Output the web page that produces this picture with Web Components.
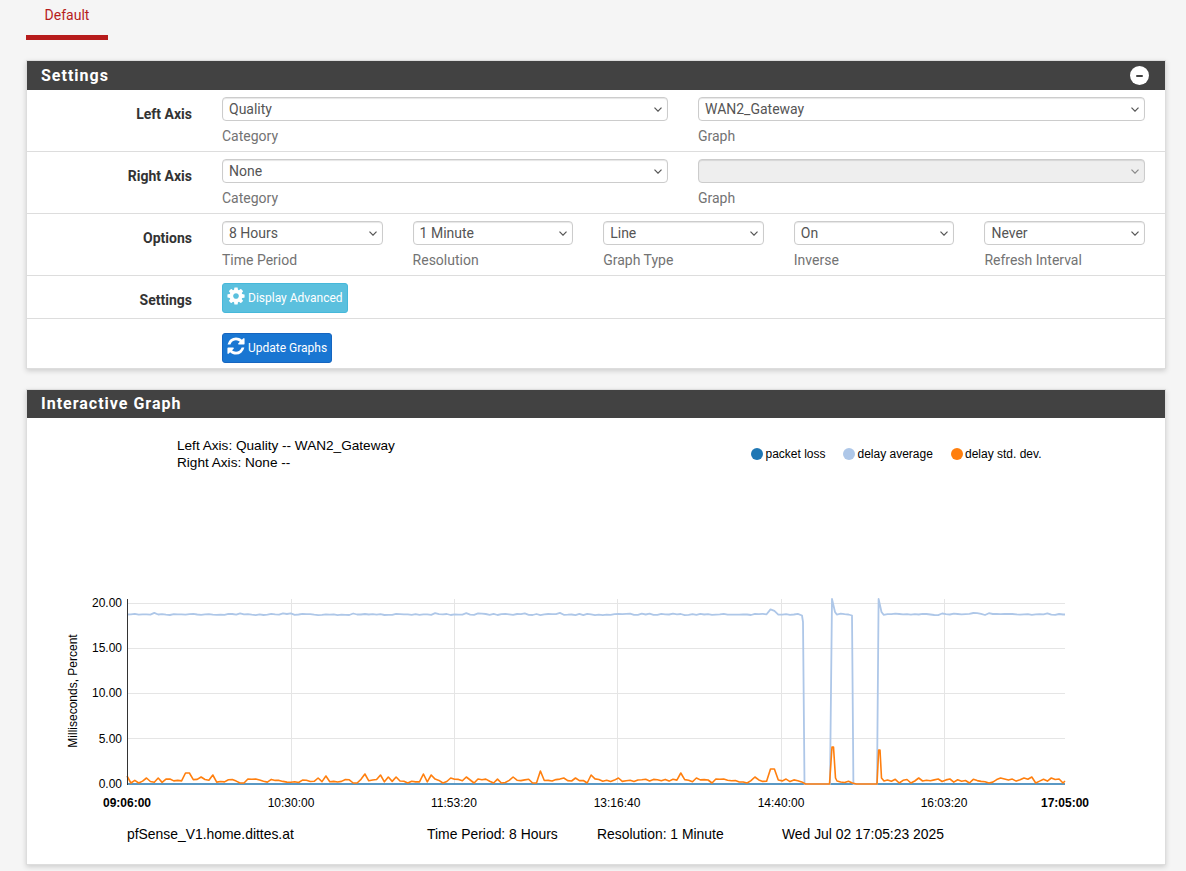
<!DOCTYPE html>
<html><head><meta charset="utf-8"><title>Status: Monitoring</title>
<style>
html,body{margin:0;background:#f5f5f5;font-family:Roboto,"Liberation Sans",sans-serif;font-size:14px;color:#333}
</style></head><body>
<pf-page>
  <pf-tab>Default</pf-tab>
  <pf-panel heading="Settings" collapse>
    <pf-row label="Left Axis" cols="2">
      <pf-select value="Quality" help="Category"></pf-select>
      <pf-select value="WAN2_Gateway" help="Graph"></pf-select>
    </pf-row>
    <pf-row label="Right Axis" cols="2">
      <pf-select value="None" help="Category"></pf-select>
      <pf-select value="" help="Graph" disabled></pf-select>
    </pf-row>
    <pf-row label="Options" cols="5">
      <pf-select value="8 Hours" help="Time Period"></pf-select>
      <pf-select value="1 Minute" help="Resolution"></pf-select>
      <pf-select value="Line" help="Graph Type"></pf-select>
      <pf-select value="On" help="Inverse"></pf-select>
      <pf-select value="Never" help="Refresh Interval"></pf-select>
    </pf-row>
    <pf-row label="Settings" cols="1" compact><pf-button icon="cog" color="#5bc0de" edge="#46b8da">Display Advanced</pf-button></pf-row>
    <pf-row label="" cols="1" compact last><pf-button icon="refresh" color="#1976d2" edge="#1565c0">Update Graphs</pf-button></pf-row>
  </pf-panel>
  <pf-panel heading="Interactive Graph" style="margin-top:20px"><pf-chart></pf-chart></pf-panel>
</pf-page>
<script>
class PfTab extends HTMLElement{constructor(){super();this.attachShadow({mode:'open'}).innerHTML=`<style>
:host{display:block;width:82px;height:40px;box-sizing:border-box;border-bottom:5px solid #b71c1c;color:#b71c1c;font:14px Roboto,sans-serif;text-align:center;line-height:16px;padding-top:7px;margin-bottom:20px}
</style><slot></slot>`}}
class PfPanel extends HTMLElement{constructor(){super();const r=this.attachShadow({mode:'open'});
r.innerHTML=`<style>
:host{display:block;background:#fff;border:1px solid #ddd;box-shadow:0 2px 5px rgba(0,0,0,.16)}
header{box-sizing:border-box;height:28px;padding:0 16px 2px 14px;background:#424242;color:#fff;display:flex;align-items:center;justify-content:space-between;font:700 16px Roboto,sans-serif;letter-spacing:1px}
:host([collapse]) header{height:29px;padding-bottom:0}
.min{width:19px;height:19px;border-radius:50%;background:#fff;display:flex;align-items:center;justify-content:center}
.min i{display:block;width:7px;height:2px;background:#424242;border-radius:1px}
</style><header><span id="t"></span><span class="min" id="m"><i></i></span></header><slot></slot>`;}
connectedCallback(){const r=this.shadowRoot;r.getElementById('t').textContent=this.getAttribute('heading');if(!this.hasAttribute('collapse'))r.getElementById('m').remove();}}
class PfRow extends HTMLElement{constructor(){super();this.attachShadow({mode:'open'}).innerHTML=`<style>
:host{display:grid;grid-template-columns:165px 1fr;column-gap:30px;padding:7px 20px 0 0;box-sizing:border-box;height:62px;border-bottom:1px solid #ddd}
:host([compact]){height:43px}
:host([last]){height:49px;border-bottom:0;padding-top:14px}
label{font:700 14px/16px Roboto,sans-serif;color:#333;text-align:right;padding-top:9px}
.c{display:grid;gap:30px;align-items:start}
</style><label id="l"></label><div class="c" id="c"><slot></slot></div>`}
connectedCallback(){const r=this.shadowRoot;r.getElementById('l').textContent=this.getAttribute('label');const n=this.getAttribute('cols');r.getElementById('c').style.gridTemplateColumns=n==='1'?'max-content':n==='2'?'446px 1fr':`repeat(${n},1fr)`;}}
class PfSelect extends HTMLElement{constructor(){super();this.attachShadow({mode:'open'}).innerHTML=`<style>
:host{display:block;min-width:0;position:relative}
select{display:block;width:100%;height:24px;box-sizing:border-box;background:#fff;border:1px solid #ccc;border-radius:4px;box-shadow:inset 0 1px 1px rgba(0,0,0,.1);color:#555;font:14px Roboto,sans-serif;padding:0 6px;margin:0;outline:0;appearance:none;-webkit-appearance:none}
select:disabled{background:#eee;opacity:1}
svg{position:absolute;right:6px;top:10px;width:8px;height:5px;fill:none;stroke:#555;stroke-width:1.2;pointer-events:none}
:host([disabled]) svg{stroke:#888}
div{font:14px/16px Roboto,sans-serif;color:#737373;margin-top:7px}
</style><select><option></option></select><svg viewBox="0 0 8 5"><path d="M.5 .7L4 4.2L7.500 .7"/></svg><div></div>`}
connectedCallback(){const r=this.shadowRoot;const s=r.querySelector('select');s.options[0].textContent=this.getAttribute('value');s.disabled=this.hasAttribute('disabled');r.querySelector('div').textContent=this.getAttribute('help');}}
const ICONS={cog:"M1152 896q0-106-75-181t-181-75-181 75-75 181 75 181 181 75 181-75 75-181zm512-109v222q0 12-8 23t-20 13l-185 28q-19 54-39 91 35 50 107 138 10 12 10 25t-9 23q-27 37-99 108t-94 71q-12 0-26-9l-138-108q-44 23-91 38-16 136-29 186-7 28-36 28h-222q-14 0-24.5-8.5t-11.5-21.5l-28-184q-49-16-90-37l-141 107q-10 9-25 9-14 0-25-11-126-114-165-168-7-10-7-23 0-12 8-23 15-21 51-66.5t54-70.5q-27-50-41-99l-183-27q-13-2-21-12.5t-8-23.5v-222q0-12 8-23t19-13l186-28q14-46 39-92-40-57-107-138-10-12-10-24 0-10 9-23 26-36 98.5-107.5t94.5-71.5q13 0 26 10l138 107q44-23 91-38 16-136 29-186 7-28 36-28h222q14 0 24.5 8.5t11.5 21.5l28 184q49 16 90 37l142-107q9-9 24-9 13 0 25 10 129 119 165 170 7 8 7 22 0 12-8 23-15 21-51 66.5t-54 70.5q26 50 41 98l183 28q13 2 21 12.5t8 23.5z",
refresh:"M1639 1056q0 5-1 7-64 268-268 434.5t-478 166.5q-146 0-282.5-55t-243.5-157l-129 129q-19 19-45 19t-45-19-19-45v-448q0-26 19-45t45-19h448q26 0 45 19t19 45-19 45l-137 137q71 66 161 102t187 36q134 0 250-65t186-179q11-17 53-117 8-23 30-23h192q13 0 22.5 9.5t9.5 22.5zm25-800v448q0 26-19 45t-45 19h-448q-26 0-45-19t-19-45 19-45l138-138q-148-137-349-137-134 0-250 65t-186 179q-11 17-53 117-8 23-30 23h-199q-13 0-22.5-9.5t-9.5-22.5v-7q65-268 270-434.5t480-166.5q146 0 284 55.5t245 156.5l130-129q19-19 45-19t45 19 19 45z"};
class PfButton extends HTMLElement{constructor(){super();this.attachShadow({mode:'open'}).innerHTML=`<style>
:host{display:inline-flex;align-items:center;height:30px;box-sizing:border-box;border:1px solid;border-radius:3px;color:#fff;font:12px Roboto,sans-serif;padding:0 4px 0 3px;gap:2px}
svg{width:20px;height:20px;fill:#fff;display:block;margin-top:-4px}
</style><svg viewBox="0 0 1792 1792"><path></path></svg><slot></slot>`}
connectedCallback(){this.style.background=this.getAttribute('color');this.style.borderColor=this.getAttribute('edge');this.shadowRoot.querySelector('path').setAttribute('d',ICONS[this.getAttribute('icon')]);}}
class PfChart extends HTMLElement{constructor(){super();
let seed=12345;const rnd=()=>{seed=(seed*1664525+1013904223)>>>0;return seed/4294967296};
const X0=127,X1=1065,Y0=784;
const peaks={128:8,147:6,158:6,172:5,188:11,202:7,214:9,257:5,317:6,325:8,364:10,380:9,388:7,397:7,424:10,430:9,453:6,468:7,480:5,514:7,540:13,563:6,577:6,593:9,618:6,683:11,698:6,718:5,757:7,771:15,775:15,920:6,940:5,1000:6,1024:6,1033:7,1051:6};
const peakAt=x=>{for(let k=x-1;k<x+3;k++)if(peaks[k])return peaks[k];return 0};
let or=[],bl=[];
for(let x=X0;x<=X1+1;x+=3.9){
  const xi=Math.round(x);let h=1.5+rnd()*3.6;if(rnd()<.12)h=1;const p=peakAt(xi);if(p)h=p;
  if(xi>=804&&xi<=830||xi>=853&&xi<=877)h=0;
  or.push([Math.min(x,X1),Y0-h]);
  if(xi<802||xi>882||(xi>836&&xi<851))bl.push([Math.min(x,X1),614.4+(rnd()-.5)*1.4-(rnd()<.06?1.2:0)-((xi>=768&&xi<=774)?4:0)]);
}
const merge=(a,extra)=>a.concat(extra).sort((p,q)=>p[0]-q[0]);
bl=merge(bl,[[802,615.5],[803,622],[804.5,784],[830,784],[832,599],[835,612],[852,615.5],[853.4,784],[877,784],[878.6,599],[881.5,612],[1065,614.5]]);
or=or.filter(p=>!(p[0]>828&&p[0]<838)&&!(p[0]>875&&p[0]<885));
or=merge(or,[[829.5,784],[832,747],[833.5,747],[835.5,778],[837,781],[877,784],[878.7,750],[880,750],[881.5,778],[884,781],[1065,781]]);
const d=a=>'M'+a.map(p=>p[0].toFixed(1)+' '+p[1].toFixed(1)).join('L');
const hg=[603,648,693,738,784].map(y=>`<line x1="${X0}" x2="${X1}" y1="${y}" y2="${y}"/>`).join('');
const vg=[291,454,617,781,944].map(x=>`<line x1="${x}" x2="${x}" y1="599" y2="784"/>`).join('');
const yt=[['20.00',607],['15.00',652],['10.00',697],['5.00',743],['0.00',788]].map(([t,y])=>`<text x="122" y="${y}" text-anchor="end">${t}</text>`).join('');
const xt=[[291,'10:30:00'],[454,'11:53:20'],[617,'13:16:40'],[781,'14:40:00'],[944,'16:03:20']].map(([x,t])=>`<text x="${x}" y="807" text-anchor="middle">${t}</text>`).join('');
this.attachShadow({mode:'open'}).innerHTML=`<style>
:host{display:block;height:446px}
svg{display:block;font:12px "Liberation Sans",Arial,sans-serif;fill:#000}
.g line{stroke:#e5e5e5;stroke-width:1;shape-rendering:crispEdges}
.t{font-size:13.6px}
.f{font-size:13.9px}
.b{font-weight:700}
path{fill:none;stroke-linejoin:round}
</style><svg width="1138" height="446" viewBox="27 418 1138 446">
<text class="t" x="177" y="450">Left Axis: Quality -- WAN2_Gateway</text>
<text class="t" x="177" y="467">Right Axis: None --</text>
<circle cx="757" cy="454" r="6" fill="#1f77b4"/><text x="765.500" y="458">packet loss</text>
<circle cx="849" cy="454" r="6" fill="#aec7e8"/><text x="857.500" y="458">delay average</text>
<circle cx="957" cy="454" r="6" fill="#ff7f0e"/><text x="965" y="458">delay std. dev.</text>
<g class="g">${hg}${vg}</g>
<line x1="${X0}" x2="${X1}" y1="784" y2="784" stroke="#5a98c4" stroke-width="2"/>
<path d="${d(bl)}" stroke="#aec7e8" stroke-width="1.8"/>
<path d="${d(or)}" stroke="#ff7f0e" stroke-width="1.6"/>
<line x1="127" x2="127" y1="599" y2="785" stroke="#333" stroke-width="1" shape-rendering="crispEdges"/>
${yt}${xt}
<text class="b" x="127" y="807" text-anchor="middle">09:06:00</text>
<text class="b" x="1065" y="807" text-anchor="middle">17:05:00</text>
<text transform="translate(77 691) rotate(-90)" text-anchor="middle">Milliseconds, Percent</text>
<text class="f" x="127" y="839">pfSense_V1.home.dittes.at</text>
<text class="f" x="427" y="839">Time Period: 8 Hours</text>
<text class="f" x="597" y="839">Resolution: 1 Minute</text>
<text class="f" x="782" y="839">Wed Jul 02 17:05:23 2025</text>
</svg>`}}
customElements.define('pf-tab',PfTab);customElements.define('pf-panel',PfPanel);customElements.define('pf-row',PfRow);customElements.define('pf-select',PfSelect);customElements.define('pf-button',PfButton);customElements.define('pf-chart',PfChart);
customElements.define('pf-page',class extends HTMLElement{constructor(){super();this.attachShadow({mode:'open'}).innerHTML='<style>:host{display:block;padding:0 20px 7px 26px}</style><slot></slot>'}});
</script>
</body></html>
